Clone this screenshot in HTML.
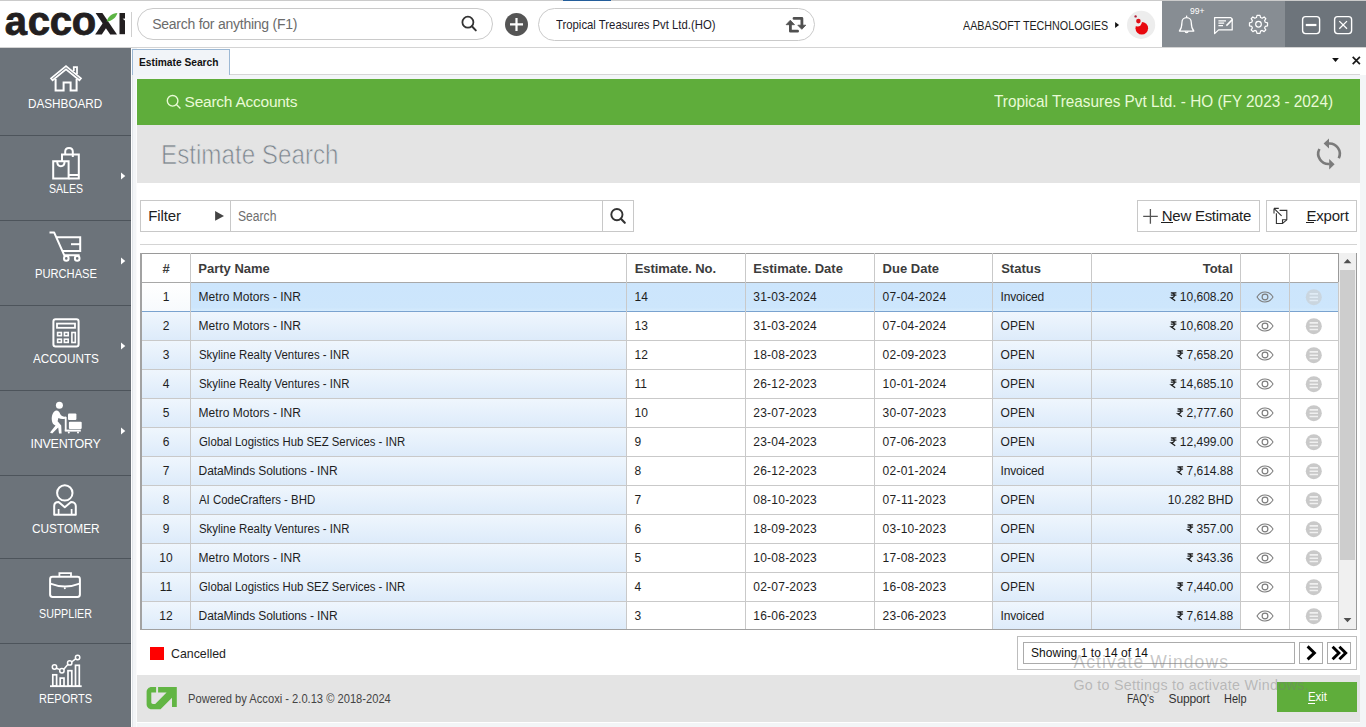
<!DOCTYPE html>
<html><head><meta charset="utf-8">
<style>
*{box-sizing:border-box;margin:0;padding:0}
html,body{width:1366px;height:727px;overflow:hidden;background:#fff;font-family:"Liberation Sans",sans-serif;color:#222}
body{position:relative}
.a{position:absolute}
.t{position:absolute;white-space:nowrap;line-height:1}
svg{position:absolute;overflow:visible}
</style></head><body>
<div class="a" style="left:0px;top:0px;width:1366px;height:1px;background:#cbcbcb;"></div>
<div class="a" style="left:563px;top:0px;width:48px;height:1px;background:#235e9b;"></div>
<div class="a" style="left:0px;top:47px;width:1366px;height:1px;background:#d4d4d4;"></div>
<div class="t" style="left:4.83px;top:0.94px;font-size:40px;color:#231f20;font-weight:700;-webkit-text-stroke:0.8px #231f20;">a</div>
<div class="t" style="left:27.64px;top:0.94px;font-size:40px;color:#231f20;font-weight:700;-webkit-text-stroke:0.8px #231f20;">c</div>
<div class="t" style="left:49.64px;top:0.94px;font-size:40px;color:#231f20;font-weight:700;-webkit-text-stroke:0.8px #231f20;">c</div>
<div class="t" style="left:71.74px;top:0.94px;font-size:40px;color:#231f20;font-weight:700;-webkit-text-stroke:0.8px #231f20;">o</div>
<svg style="left:0;top:0" width="131" height="47" viewBox="0 0 131 47"><path d="M119.5 13 H125 V34.2 H119.5 Z" fill="#231f20"/><path d="M122.6 18.8 L125.2 18.4 L125.2 20.8 Z" fill="#fff"/><path d="M95.6 12.9 H102.4 L117 34.4 H110.2 Z" fill="#231f20"/><path d="M95.2 34.4 H101.8 L107.8 25.6 L104.4 20.8 Z" fill="#231f20"/><path d="M106.6 21.6 C108.2 16.4 111.8 13.4 117.4 13 C116 17.8 112.2 20.9 106.6 21.6 Z" fill="#5cb544"/></svg>
<div class="a" style="left:131px;top:12px;width:1px;height:25px;background:#cfcfcf;"></div>
<div class="a" style="left:137px;top:8px;width:356px;height:32px;border:1px solid #cacaca;border-radius:16px"></div>
<div class="t" style="left:152.20px;top:17.15px;font-size:14px;color:#6b6b6b;letter-spacing:-0.249px;">Search for anything (F1)</div>
<svg style="left:455px;top:10px" width="30" height="30" viewBox="455 10 30 30"><circle cx="467.9" cy="22.2" r="5.5" fill="none" stroke="#333" stroke-width="1.8"/><path d="M471.9 26.3 L475.8 30.4" stroke="#333" stroke-width="2" stroke-linecap="round"/></svg>
<svg style="left:500px;top:8px" width="34" height="34" viewBox="500 8 34 34"><circle cx="516.5" cy="24.4" r="11.5" fill="#555"/><path d="M510 24.4 H523 M516.5 17.9 V30.9" stroke="#fff" stroke-width="2.2"/></svg>
<div class="a" style="left:538px;top:8px;width:277px;height:33px;border:1px solid #cacaca;border-radius:16.5px"></div>
<div class="t" style="left:555.90px;top:18.10px;font-size:13px;color:#1d1b2a;transform:scaleX(0.8715);transform-origin:0 0;">Tropical Treasures Pvt Ltd.(HO)</div>
<svg style="left:780px;top:12px" width="30" height="26" viewBox="780 12 30 26"><path d="M790.4 24 V31.2 H797.6" fill="none" stroke="#505050" stroke-width="2.8" stroke-linejoin="round" stroke-linecap="round"/><path d="M786.1 24.7 L790.3 20.2 L794.5 24.7 Z" fill="#505050" stroke="#505050" stroke-width="0.8" stroke-linejoin="round"/><path d="M794 18.4 H801.9 V25.6" fill="none" stroke="#505050" stroke-width="2.8" stroke-linejoin="round" stroke-linecap="round"/><path d="M797.8 25.2 L801.8 29.3 L805.8 25.2 Z" fill="#505050" stroke="#505050" stroke-width="0.8" stroke-linejoin="round"/></svg>
<div class="t" style="left:962.60px;top:18.80px;font-size:13px;color:#1e1e1e;transform:scaleX(0.8260);transform-origin:0 0;">AABASOFT TECHNOLOGIES</div>
<svg style="left:1112px;top:18px" width="10" height="14" viewBox="1112 18 10 14"><path d="M1115.1 22 L1119.1 25 L1115.1 28.1 Z" fill="#111"/></svg>
<svg style="left:1125px;top:9px" width="32" height="32" viewBox="1125 9 32 32"><circle cx="1141.1" cy="24.9" r="14.1" fill="#ededed"/><circle cx="1141.8" cy="28.3" r="6.3" fill="#e8080e"/><circle cx="1137.6" cy="22.2" r="4.2" fill="#ededed"/><circle cx="1138.4" cy="21.1" r="2.3" fill="#e01018"/><circle cx="1135.6" cy="16.4" r="1.2" fill="#b0203a"/></svg>
<div class="a" style="left:1162px;top:1px;width:123px;height:46px;background:#878d93;"></div>
<div class="a" style="left:1285px;top:1px;width:81px;height:46px;background:#6d747b;"></div>
<svg style="left:1162px;top:1px" width="204" height="46" viewBox="1162 1 204 46" fill="none" stroke="#fff" stroke-width="1.25"><path d="M1179.4 31 H1193.8 C1191.8 28.6 1191.3 26 1191.3 22.7 C1191.3 19.6 1189.2 17.6 1186.6 17.6 C1184 17.6 1181.9 19.6 1181.9 22.7 C1181.9 26 1181.4 28.6 1179.4 31 Z" stroke-linejoin="round"/><path d="M1186.6 17.5 V15.6"/><path d="M1185.2 31.2 A1.4 1.4 0 0 0 1188 31.2"/><path d="M1214.6 33.6 V17.6 H1230.8 L1232.2 19 V29.9 H1218.6 Z" stroke-linejoin="round"/><path d="M1218.4 20.8 H1226 M1218.4 23.2 H1224.2 M1218.4 25.7 H1223" stroke-width="1.3"/><path d="M1226.4 25.6 L1232.6 19.4" stroke-width="1.5"/><g transform="translate(1258.5 24.3) scale(0.94)" stroke-width="1.3"><path d="M-1.6 -9.6 H1.6 L2.2 -7.2 L3.9 -6.5 L6 -7.8 L7.8 -6 L6.5 -3.9 L7.2 -2.2 L9.6 -1.6 V1.6 L7.2 2.2 L6.5 3.9 L7.8 6 L6 7.8 L3.9 6.5 L2.2 7.2 L1.6 9.6 H-1.6 L-2.2 7.2 L-3.9 6.5 L-6 7.8 L-7.8 6 L-6.5 3.9 L-7.2 2.2 L-9.6 1.6 V-1.6 L-7.2 -2.2 L-6.5 -3.9 L-7.8 -6 L-6 -7.8 L-3.9 -6.5 L-2.2 -7.2 Z" stroke-linejoin="round"/><circle r="3" /></g><rect x="1302.6" y="16.6" width="17" height="17" rx="3" stroke-width="1.4"/><path d="M1305.8 25 H1316.4" stroke-width="2.2"/><rect x="1334.6" y="16.6" width="17" height="17" rx="3" stroke-width="1.4"/><path d="M1339.3 21.1 L1347 28.8 M1347 21.1 L1339.3 28.8" stroke-width="1.3"/></svg>
<div class="t" style="left:1190.40px;top:7.38px;font-size:9px;color:#ffffff;transform:scaleX(0.9554);transform-origin:0 0;">99+</div>
<div class="a" style="left:0px;top:48px;width:131px;height:679px;background:#6c737a;"></div>
<div class="a" style="left:0px;top:135px;width:131px;height:1px;background:#4d545b;"></div>
<div class="a" style="left:0px;top:220px;width:131px;height:1px;background:#4d545b;"></div>
<div class="a" style="left:0px;top:305px;width:131px;height:1px;background:#4d545b;"></div>
<div class="a" style="left:0px;top:390px;width:131px;height:1px;background:#4d545b;"></div>
<div class="a" style="left:0px;top:475px;width:131px;height:1px;background:#4d545b;"></div>
<div class="a" style="left:0px;top:558px;width:131px;height:1px;background:#4d545b;"></div>
<div class="a" style="left:0px;top:643px;width:131px;height:1px;background:#4d545b;"></div>
<div class="a" style="left:131px;top:48px;width:6px;height:679px;background:#f3f5f7;"></div>
<div class="a" style="left:131px;top:48px;width:1px;height:679px;background:#ffffff;"></div>
<div class="a" style="left:132px;top:75px;width:1px;height:652px;background:#e1e5e9;"></div>
<div class="a" style="left:136px;top:75px;width:1px;height:652px;background:#fbfbfc;"></div>
<div class="t" style="left:28.45px;top:98.02px;font-size:12.5px;color:#ffffff;transform:scaleX(0.9383);transform-origin:0 0;">DASHBOARD</div>
<div class="t" style="left:48.55px;top:183.12px;font-size:12.5px;color:#ffffff;transform:scaleX(0.8459);transform-origin:0 0;">SALES</div>
<div class="t" style="left:34.60px;top:268.02px;font-size:12.5px;color:#ffffff;transform:scaleX(0.8925);transform-origin:0 0;">PURCHASE</div>
<div class="t" style="left:32.65px;top:352.72px;font-size:12.5px;color:#ffffff;transform:scaleX(0.9393);transform-origin:0 0;">ACCOUNTS</div>
<div class="t" style="left:30.60px;top:438.02px;font-size:12.5px;color:#ffffff;letter-spacing:-0.276px;">INVENTORY</div>
<div class="t" style="left:31.80px;top:522.72px;font-size:12.5px;color:#ffffff;transform:scaleX(0.9479);transform-origin:0 0;">CUSTOMER</div>
<div class="t" style="left:39.10px;top:607.52px;font-size:12.5px;color:#ffffff;transform:scaleX(0.8570);transform-origin:0 0;">SUPPLIER</div>
<div class="t" style="left:39.10px;top:693.12px;font-size:12.5px;color:#ffffff;transform:scaleX(0.8804);transform-origin:0 0;">REPORTS</div>
<svg style="left:118px;top:169.5px" width="10" height="12" viewBox="118 169.5 10 12"><path d="M121 171.9 L125.3 175.5 L121 179.1 Z" fill="#fff"/></svg>
<svg style="left:118px;top:254.5px" width="10" height="12" viewBox="118 254.5 10 12"><path d="M121 256.9 L125.3 260.5 L121 264.1 Z" fill="#fff"/></svg>
<svg style="left:118px;top:339.5px" width="10" height="12" viewBox="118 339.5 10 12"><path d="M121 341.9 L125.3 345.5 L121 349.1 Z" fill="#fff"/></svg>
<svg style="left:118px;top:424.5px" width="10" height="12" viewBox="118 424.5 10 12"><path d="M121 426.9 L125.3 430.5 L121 434.1 Z" fill="#fff"/></svg>
<svg style="left:0;top:48px" width="131" height="679" viewBox="0 48 131 679" fill="none" stroke="#fff" stroke-width="2"><path d="M51 78.3 L66 66 L81 78.3 L79.4 80.2 L66 69.3 L52.6 80.2 Z" stroke-width="1.7" stroke-linejoin="miter"/><path d="M55.6 79 V90.6 H63.6 V82.4 H70.6 V90.6 H76.6 V79" /><path d="M73.8 71 V67.2 H77 V74" stroke-width="1.8"/><path d="M53.2 161.3 H68.6 V178.4 H53.2 Z"/><path d="M57.2 161.3 C57.2 167.8 64.6 167.8 64.6 161.3"/><path d="M62 161.3 V154.5 H78.8 V178.4 H68.6"/><path d="M68.6 175 H78.8"/><path d="M65.2 154.5 V151.8 C65.2 146.8 72.8 146.8 72.8 151.8 V157"/><path d="M49.5 232.6 H54.2 L64.2 255.2 H79.6" stroke-linejoin="round"/><path d="M56.6 237.2 H80.2 V251 H62.4"/><path d="M71 244.2 H80.2"/><circle cx="66.3" cy="258.4" r="2.3"/><circle cx="77.2" cy="258.4" r="2.3"/><rect x="53.4" y="319.2" width="25.2" height="27.2" rx="2.2"/><rect x="57" y="323.6" width="18" height="4.2" stroke-width="1.8"/><rect x="57.6" y="332.5" width="3.8" height="3.2" stroke-width="1.6"/><rect x="64.4" y="332.5" width="3.8" height="3.2" stroke-width="1.6"/><rect x="57.6" y="339.2" width="3.8" height="3.2" stroke-width="1.6"/><rect x="64.4" y="339.2" width="3.8" height="3.2" stroke-width="1.6"/><rect x="71.9" y="332.5" width="3.4" height="10" stroke-width="1.6"/><circle cx="64.8" cy="492.9" r="7.7"/><path d="M54.2 514.8 V506 C54.2 503.6 56 502 58.6 502 L64.8 507.2 L71 502 C73.6 502 75.8 503.6 75.8 506 V514.8 Z" stroke-linejoin="round"/><path d="M58.6 509 V514.8 M71.6 509 V514.8" stroke-width="1.7"/><rect x="50.1" y="576.8" width="29.8" height="20.2" rx="2.4"/><path d="M59.4 576.8 V573.2 H71 V576.8" stroke-width="1.8"/><path d="M50.4 583.6 Q65 589.4 79.6 583.6" stroke-width="1.8"/><circle cx="64.8" cy="588.2" r="1" fill="#fff" stroke="none"/><path d="M50 686.2 H81.7" stroke-width="1.8"/><rect x="52.8" y="674.8" width="3.8" height="11.2" stroke-width="1.7"/><rect x="60.2" y="678.1" width="3.8" height="8" stroke-width="1.7"/><rect x="68" y="670.7" width="3.8" height="15.4" stroke-width="1.7"/><rect x="75.5" y="665.3" width="3.8" height="20.8" stroke-width="1.7"/><path d="M56.4 668.2 L60 669.6 M63.6 669.4 L68 664.2 M71.6 662 L75.6 658.8" stroke-width="1.5"/><circle cx="54.5" cy="667" r="2.2" stroke-width="1.5"/><circle cx="61.9" cy="670.7" r="2.2" stroke-width="1.5"/><circle cx="69.7" cy="662.9" r="2.2" stroke-width="1.5"/><circle cx="77.6" cy="657.5" r="2.2" stroke-width="1.5"/></svg>
<svg style="left:0;top:390px" width="131" height="85" viewBox="0 390 131 85" fill="#fff"><circle cx="59.4" cy="405.3" r="3.5"/><path d="M56 410.5 C53 411.5 51.5 415.5 51.8 420 C52 423 53.5 425 55.5 425.5 L50 432.4 L52.2 433.6 L58.2 427.6 L59 433.4 L61.6 433.4 L61.2 425.5 L57.6 421.2 L58.4 418 C60.4 419.2 63 419.6 65.8 418.4 L65.8 416.6 C63.4 417 61.4 416 60.2 414 C59.4 411.5 58 410.2 56 410.5 Z"/><rect x="64.8" y="416.9" width="1.8" height="14"/><rect x="64.8" y="429.6" width="16" height="2"/><circle cx="68.8" cy="432.6" r="1"/><circle cx="78" cy="432.6" r="1"/><rect x="68" y="413.6" width="8.4" height="6.4" rx="1"/><rect x="68.9" y="421.8" width="12.8" height="7.2" rx="1"/></svg>
<div class="a" style="left:133px;top:75px;width:1227px;height:4px;background:#f3f5f8;"></div>
<div class="a" style="left:132px;top:49px;width:98px;height:26px;background:#f1f4f8;border:1px solid #9cb8d4;border-bottom:none"></div>
<div class="t" style="left:138.60px;top:56.89px;font-size:11px;color:#111;font-weight:700;transform:scaleX(0.9286);transform-origin:0 0;">Estimate Search</div>
<div class="a" style="left:230px;top:74px;width:1130px;height:1px;background:#d6d6d6;"></div>
<svg style="left:1328px;top:52px" width="38" height="18" viewBox="1328 52 38 18"><path d="M1332.1 57.9 H1338.9 L1335.5 61.9 Z" fill="#111"/><path d="M1352.7 56.9 L1359.9 64.1 M1359.9 56.9 L1352.7 64.1" stroke="#1a1a1a" stroke-width="1.7"/></svg>
<div class="a" style="left:137px;top:79px;width:1223px;height:46px;background:#5fad3b;"></div>
<svg style="left:160px;top:90px" width="26" height="24" viewBox="160 90 26 24" fill="none" stroke="#e9fad6" stroke-width="1.4"><circle cx="172.6" cy="100.8" r="5.3"/><path d="M176.4 104.6 L180.4 108.4"/></svg>
<div class="t" style="left:184.60px;top:93.58px;font-size:15.5px;color:#e9fad6;letter-spacing:-0.249px;">Search Accounts</div>
<div class="t" style="left:994.10px;top:93.01px;font-size:17px;color:#e9fad6;transform:scaleX(0.9015);transform-origin:0 0;">Tropical Treasures Pvt Ltd. - HO (FY 2023 - 2024)</div>
<div class="a" style="left:137px;top:125px;width:1223px;height:58px;background:#e4e4e4;"></div>
<div class="t" style="left:161.20px;top:140.50px;font-size:28px;color:#7d868e;transform:scaleX(0.8641);transform-origin:0 0;-webkit-text-stroke:0.7px #e4e4e4;">Estimate Search</div>
<svg style="left:1310px;top:134px" width="40" height="40" viewBox="1310 134 40 40" fill="none" stroke="#7b7b7b" stroke-width="2.6"><path d="M1328.4 143.6 A10.3 10.3 0 0 1 1338.8 158.2"/><path d="M1329.6 164 A10.3 10.3 0 0 1 1319.4 149"/><path d="M1323.6 143.4 L1329 138.4 V148.6 Z" fill="#7b7b7b" stroke="none"/><path d="M1334.6 164.3 L1329.2 159 V169.6 Z" fill="#7b7b7b" stroke="none"/></svg>
<div class="a" style="left:140px;top:200px;width:494px;height:32px;border:1px solid #c8c8c8;background:#fff"></div>
<div class="a" style="left:230px;top:200px;width:1px;height:32px;background:#c8c8c8;"></div>
<div class="a" style="left:602px;top:200px;width:1px;height:32px;background:#c8c8c8;"></div>
<div class="t" style="left:148.30px;top:208.20px;font-size:15px;color:#1e1e1e;letter-spacing:-0.124px;">Filter</div>
<svg style="left:210px;top:206px" width="18" height="20" viewBox="210 206 18 20"><path d="M215.1 211.1 L224 216 L215.1 220.8 Z" fill="#444"/></svg>
<div class="t" style="left:237.60px;top:209.15px;font-size:14px;color:#6e6e6e;transform:scaleX(0.8657);transform-origin:0 0;">Search</div>
<svg style="left:604px;top:202px" width="28" height="28" viewBox="604 202 28 28"><circle cx="616.9" cy="214.6" r="5.6" fill="none" stroke="#333" stroke-width="1.9"/><path d="M620.9 218.7 L624.8 222.8" stroke="#333" stroke-width="2.1" stroke-linecap="round"/></svg>
<div class="a" style="left:1137px;top:200px;width:123px;height:32px;border:1px solid #c8c8c8"></div>
<div class="a" style="left:1266px;top:200px;width:91px;height:32px;border:1px solid #c8c8c8"></div>
<svg style="left:1140px;top:204px" width="22" height="24" viewBox="1140 204 22 24"><path d="M1143.2 216.4 H1157.8 M1150.4 209.1 V223.7" stroke="#555" stroke-width="1.3"/></svg>
<div class="t" style="left:1161.80px;top:208.20px;font-size:15px;color:#1e1e1e;letter-spacing:-0.269px;">New Estimate</div>
<div class="a" style="left:1161px;top:222px;width:12px;height:1px;background:#1e1e1e;"></div>
<svg style="left:1268px;top:204px" width="24" height="24" viewBox="1268 204 24 24" fill="none" stroke="#333" stroke-width="1.1"><path d="M1281.6 215.8 L1274.2 208.6 M1274 208.4 H1278.8 M1274 208.4 V213.6"/><path d="M1276.4 213.3 V223.5 H1282.5 L1286.8 219.8 V210.4 H1279.6"/><path d="M1282.5 223.5 V219.8 H1286.8"/></svg>
<div class="t" style="left:1306.40px;top:208.20px;font-size:15px;color:#1e1e1e;letter-spacing:-0.177px;">Export</div>
<div class="a" style="left:1306px;top:222px;width:8px;height:1px;background:#1e1e1e;"></div>
<div class="a" style="left:140px;top:244px;width:1217px;height:1px;background:#d4d4d4;"></div>
<div class="a" style="left:141px;top:253px;width:1216px;height:377px;overflow:hidden;background:#fff">
<div class="a" style="left:49px;top:30px;width:1148px;height:28px;background:linear-gradient(#cce5fc 0%,#cde6fc 88%,#d6ecfd 100%)"></div>
<div class="a" style="left:1px;top:30px;width:48px;height:28px;background:linear-gradient(#ffffff,#f7fafd)"></div>
<div class="a" style="left:0px;top:59px;width:485px;height:28px;background:linear-gradient(#eff6fd,#ddebfa)"></div>
<div class="a" style="left:851px;top:59px;width:248px;height:28px;background:linear-gradient(#eff6fd,#ddebfa)"></div>
<div class="a" style="left:0px;top:88px;width:485px;height:28px;background:linear-gradient(#eff6fd,#ddebfa)"></div>
<div class="a" style="left:851px;top:88px;width:248px;height:28px;background:linear-gradient(#eff6fd,#ddebfa)"></div>
<div class="a" style="left:0px;top:117px;width:485px;height:28px;background:linear-gradient(#eff6fd,#ddebfa)"></div>
<div class="a" style="left:851px;top:117px;width:248px;height:28px;background:linear-gradient(#eff6fd,#ddebfa)"></div>
<div class="a" style="left:0px;top:146px;width:485px;height:28px;background:linear-gradient(#eff6fd,#ddebfa)"></div>
<div class="a" style="left:851px;top:146px;width:248px;height:28px;background:linear-gradient(#eff6fd,#ddebfa)"></div>
<div class="a" style="left:0px;top:175px;width:485px;height:28px;background:linear-gradient(#eff6fd,#ddebfa)"></div>
<div class="a" style="left:851px;top:175px;width:248px;height:28px;background:linear-gradient(#eff6fd,#ddebfa)"></div>
<div class="a" style="left:0px;top:204px;width:485px;height:28px;background:linear-gradient(#eff6fd,#ddebfa)"></div>
<div class="a" style="left:851px;top:204px;width:248px;height:28px;background:linear-gradient(#eff6fd,#ddebfa)"></div>
<div class="a" style="left:0px;top:233px;width:485px;height:28px;background:linear-gradient(#eff6fd,#ddebfa)"></div>
<div class="a" style="left:851px;top:233px;width:248px;height:28px;background:linear-gradient(#eff6fd,#ddebfa)"></div>
<div class="a" style="left:0px;top:262px;width:485px;height:28px;background:linear-gradient(#eff6fd,#ddebfa)"></div>
<div class="a" style="left:851px;top:262px;width:248px;height:28px;background:linear-gradient(#eff6fd,#ddebfa)"></div>
<div class="a" style="left:0px;top:291px;width:485px;height:28px;background:linear-gradient(#eff6fd,#ddebfa)"></div>
<div class="a" style="left:851px;top:291px;width:248px;height:28px;background:linear-gradient(#eff6fd,#ddebfa)"></div>
<div class="a" style="left:0px;top:320px;width:485px;height:28px;background:linear-gradient(#eff6fd,#ddebfa)"></div>
<div class="a" style="left:851px;top:320px;width:248px;height:28px;background:linear-gradient(#eff6fd,#ddebfa)"></div>
<div class="a" style="left:0px;top:349px;width:485px;height:28px;background:linear-gradient(#eff6fd,#ddebfa)"></div>
<div class="a" style="left:851px;top:349px;width:248px;height:28px;background:linear-gradient(#eff6fd,#ddebfa)"></div>
<div class="a" style="left:0;top:0;width:1198px;height:1px;background:#9a9a9a"></div>
<div class="a" style="left:0;top:29px;width:1198px;height:1px;background:#a8a8a8"></div>
<div class="a" style="left:0;top:58px;width:1198px;height:1px;background:#7aa3cf"></div>
<div class="a" style="left:0;top:87px;width:1198px;height:1px;background:#c9c9c9"></div>
<div class="a" style="left:0;top:116px;width:1198px;height:1px;background:#c9c9c9"></div>
<div class="a" style="left:0;top:145px;width:1198px;height:1px;background:#c9c9c9"></div>
<div class="a" style="left:0;top:174px;width:1198px;height:1px;background:#c9c9c9"></div>
<div class="a" style="left:0;top:203px;width:1198px;height:1px;background:#c9c9c9"></div>
<div class="a" style="left:0;top:232px;width:1198px;height:1px;background:#c9c9c9"></div>
<div class="a" style="left:0;top:261px;width:1198px;height:1px;background:#c9c9c9"></div>
<div class="a" style="left:0;top:290px;width:1198px;height:1px;background:#c9c9c9"></div>
<div class="a" style="left:0;top:319px;width:1198px;height:1px;background:#c9c9c9"></div>
<div class="a" style="left:0;top:348px;width:1198px;height:1px;background:#c9c9c9"></div>
<div class="a" style="left:0;top:377px;width:1198px;height:1px;background:#c9c9c9"></div>
<div class="a" style="left:49px;top:0;width:1px;height:377px;background:#c9c9c9"></div>
<div class="a" style="left:485px;top:0;width:1px;height:377px;background:#c9c9c9"></div>
<div class="a" style="left:604px;top:0;width:1px;height:377px;background:#c9c9c9"></div>
<div class="a" style="left:733px;top:0;width:1px;height:377px;background:#c9c9c9"></div>
<div class="a" style="left:851px;top:0;width:1px;height:377px;background:#c9c9c9"></div>
<div class="a" style="left:950px;top:0;width:1px;height:377px;background:#c9c9c9"></div>
<div class="a" style="left:1099px;top:0;width:1px;height:377px;background:#c9c9c9"></div>
<div class="a" style="left:1148px;top:0;width:1px;height:377px;background:#c9c9c9"></div>
<div class="a" style="left:1197px;top:0;width:1px;height:377px;background:#c9c9c9"></div>
<div class="a" style="left:0;top:0;width:1px;height:377px;background:#9a9a9a"></div>
<div class="a" style="left:1197px;top:0;width:1px;height:29px;background:#9a9a9a"></div>
<div class="a" style="left:0;top:376px;width:1216px;height:1px;background:#a0a0a0"></div>
<div class="a" style="left:1198px;top:0;width:17px;height:376px;background:#f0f0f0"></div>
<div class="a" style="left:1199px;top:17px;width:15px;height:290px;background:#cdcdcd"></div>
<div class="a" style="left:1215px;top:0;width:1px;height:377px;background:#9a9a9a"></div>
<svg style="left:1198px;top:0" width="17" height="376" viewBox="0 0 17 376"><path d="M4.6 10.2 L8.5 6 L12.4 10.2 Z" fill="#505050"/><path d="M4.6 365 L8.5 369.2 L12.4 365 Z" fill="#505050"/></svg>
</div>
<div class="a" style="left:140px;top:253px;width:2px;height:377px;background:#a2a2a2;"></div>
<div class="t" style="left:162.38px;top:262.30px;font-size:13px;color:#3c3c3c;font-weight:700;">#</div>
<div class="t" style="left:198.30px;top:262.30px;font-size:13px;color:#3c3c3c;font-weight:700;">Party Name</div>
<div class="t" style="left:634.70px;top:262.30px;font-size:13px;color:#3c3c3c;font-weight:700;letter-spacing:-0.081px;">Estimate. No.</div>
<div class="t" style="left:753.30px;top:262.30px;font-size:13px;color:#3c3c3c;font-weight:700;">Estimate. Date</div>
<div class="t" style="left:882.60px;top:262.30px;font-size:13px;color:#3c3c3c;font-weight:700;">Due Date</div>
<div class="t" style="left:1001.20px;top:262.30px;font-size:13px;color:#3c3c3c;font-weight:700;">Status</div>
<div class="t" style="left:1202.71px;top:262.30px;font-size:13px;color:#3c3c3c;font-weight:700;">Total</div>
<div class="t" style="left:162.66px;top:290.84px;font-size:12px;color:#1e1e1e;">1</div>
<div class="t" style="left:198.60px;top:290.84px;font-size:12px;color:#1e1e1e;letter-spacing:0.021px;">Metro Motors - INR</div>
<div class="t" style="left:634.50px;top:290.84px;font-size:12px;color:#1e1e1e;">14</div>
<div class="t" style="left:753.30px;top:290.84px;font-size:12px;color:#1e1e1e;letter-spacing:0.231px;">31-03-2024</div>
<div class="t" style="left:882.60px;top:290.84px;font-size:12px;color:#1e1e1e;letter-spacing:0.231px;">07-04-2024</div>
<div class="t" style="left:1000.60px;top:290.84px;font-size:12px;color:#1e1e1e;letter-spacing:-0.163px;">Invoiced</div>
<div class="t" style="left:1179.81px;top:290.84px;font-size:12px;color:#1e1e1e;">10,608.20</div>
<svg style="left:0;top:0" width="1366" height="727" viewBox="0 0 1366 727"><path d="M1170.81 292.80 H1176.41 M1170.81 295.20 H1176.41 M1171.11 292.80 C1175.41 292.80 1175.61 297.80 1171.11 297.80 L1175.21 300.80" fill="none" stroke="#1e1e1e" stroke-width="1.25"/></svg>
<div class="t" style="left:162.66px;top:319.84px;font-size:12px;color:#1e1e1e;">2</div>
<div class="t" style="left:198.60px;top:319.84px;font-size:12px;color:#1e1e1e;letter-spacing:0.021px;">Metro Motors - INR</div>
<div class="t" style="left:634.50px;top:319.84px;font-size:12px;color:#1e1e1e;">13</div>
<div class="t" style="left:753.30px;top:319.84px;font-size:12px;color:#1e1e1e;letter-spacing:0.231px;">31-03-2024</div>
<div class="t" style="left:882.60px;top:319.84px;font-size:12px;color:#1e1e1e;letter-spacing:0.231px;">07-04-2024</div>
<div class="t" style="left:1000.60px;top:319.84px;font-size:12px;color:#1e1e1e;">OPEN</div>
<div class="t" style="left:1179.81px;top:319.84px;font-size:12px;color:#1e1e1e;">10,608.20</div>
<svg style="left:0;top:0" width="1366" height="727" viewBox="0 0 1366 727"><path d="M1170.81 321.80 H1176.41 M1170.81 324.20 H1176.41 M1171.11 321.80 C1175.41 321.80 1175.61 326.80 1171.11 326.80 L1175.21 329.80" fill="none" stroke="#1e1e1e" stroke-width="1.25"/></svg>
<div class="t" style="left:162.66px;top:348.84px;font-size:12px;color:#1e1e1e;">3</div>
<div class="t" style="left:198.60px;top:348.84px;font-size:12px;color:#1e1e1e;transform:scaleX(0.9515);transform-origin:0 0;">Skyline Realty Ventures - INR</div>
<div class="t" style="left:634.50px;top:348.84px;font-size:12px;color:#1e1e1e;">12</div>
<div class="t" style="left:753.30px;top:348.84px;font-size:12px;color:#1e1e1e;letter-spacing:0.231px;">18-08-2023</div>
<div class="t" style="left:882.60px;top:348.84px;font-size:12px;color:#1e1e1e;letter-spacing:0.231px;">02-09-2023</div>
<div class="t" style="left:1000.60px;top:348.84px;font-size:12px;color:#1e1e1e;">OPEN</div>
<div class="t" style="left:1186.48px;top:348.84px;font-size:12px;color:#1e1e1e;">7,658.20</div>
<svg style="left:0;top:0" width="1366" height="727" viewBox="0 0 1366 727"><path d="M1177.48 350.80 H1183.08 M1177.48 353.20 H1183.08 M1177.78 350.80 C1182.08 350.80 1182.28 355.80 1177.78 355.80 L1181.88 358.80" fill="none" stroke="#1e1e1e" stroke-width="1.25"/></svg>
<div class="t" style="left:162.66px;top:377.84px;font-size:12px;color:#1e1e1e;">4</div>
<div class="t" style="left:198.60px;top:377.84px;font-size:12px;color:#1e1e1e;transform:scaleX(0.9515);transform-origin:0 0;">Skyline Realty Ventures - INR</div>
<div class="t" style="left:634.50px;top:377.84px;font-size:12px;color:#1e1e1e;">11</div>
<div class="t" style="left:753.30px;top:377.84px;font-size:12px;color:#1e1e1e;letter-spacing:0.231px;">26-12-2023</div>
<div class="t" style="left:882.60px;top:377.84px;font-size:12px;color:#1e1e1e;letter-spacing:0.231px;">10-01-2024</div>
<div class="t" style="left:1000.60px;top:377.84px;font-size:12px;color:#1e1e1e;">OPEN</div>
<div class="t" style="left:1179.81px;top:377.84px;font-size:12px;color:#1e1e1e;">14,685.10</div>
<svg style="left:0;top:0" width="1366" height="727" viewBox="0 0 1366 727"><path d="M1170.81 379.80 H1176.41 M1170.81 382.20 H1176.41 M1171.11 379.80 C1175.41 379.80 1175.61 384.80 1171.11 384.80 L1175.21 387.80" fill="none" stroke="#1e1e1e" stroke-width="1.25"/></svg>
<div class="t" style="left:162.66px;top:406.84px;font-size:12px;color:#1e1e1e;">5</div>
<div class="t" style="left:198.60px;top:406.84px;font-size:12px;color:#1e1e1e;letter-spacing:0.021px;">Metro Motors - INR</div>
<div class="t" style="left:634.50px;top:406.84px;font-size:12px;color:#1e1e1e;">10</div>
<div class="t" style="left:753.30px;top:406.84px;font-size:12px;color:#1e1e1e;letter-spacing:0.231px;">23-07-2023</div>
<div class="t" style="left:882.60px;top:406.84px;font-size:12px;color:#1e1e1e;letter-spacing:0.231px;">30-07-2023</div>
<div class="t" style="left:1000.60px;top:406.84px;font-size:12px;color:#1e1e1e;">OPEN</div>
<div class="t" style="left:1186.48px;top:406.84px;font-size:12px;color:#1e1e1e;">2,777.60</div>
<svg style="left:0;top:0" width="1366" height="727" viewBox="0 0 1366 727"><path d="M1177.48 408.80 H1183.08 M1177.48 411.20 H1183.08 M1177.78 408.80 C1182.08 408.80 1182.28 413.80 1177.78 413.80 L1181.88 416.80" fill="none" stroke="#1e1e1e" stroke-width="1.25"/></svg>
<div class="t" style="left:162.66px;top:435.84px;font-size:12px;color:#1e1e1e;">6</div>
<div class="t" style="left:198.60px;top:435.84px;font-size:12px;color:#1e1e1e;transform:scaleX(0.9480);transform-origin:0 0;">Global Logistics Hub SEZ Services - INR</div>
<div class="t" style="left:634.50px;top:435.84px;font-size:12px;color:#1e1e1e;">9</div>
<div class="t" style="left:753.30px;top:435.84px;font-size:12px;color:#1e1e1e;letter-spacing:0.231px;">23-04-2023</div>
<div class="t" style="left:882.60px;top:435.84px;font-size:12px;color:#1e1e1e;letter-spacing:0.231px;">07-06-2023</div>
<div class="t" style="left:1000.60px;top:435.84px;font-size:12px;color:#1e1e1e;">OPEN</div>
<div class="t" style="left:1179.81px;top:435.84px;font-size:12px;color:#1e1e1e;">12,499.00</div>
<svg style="left:0;top:0" width="1366" height="727" viewBox="0 0 1366 727"><path d="M1170.81 437.80 H1176.41 M1170.81 440.20 H1176.41 M1171.11 437.80 C1175.41 437.80 1175.61 442.80 1171.11 442.80 L1175.21 445.80" fill="none" stroke="#1e1e1e" stroke-width="1.25"/></svg>
<div class="t" style="left:162.66px;top:464.84px;font-size:12px;color:#1e1e1e;">7</div>
<div class="t" style="left:198.60px;top:464.84px;font-size:12px;color:#1e1e1e;letter-spacing:-0.100px;">DataMinds Solutions - INR</div>
<div class="t" style="left:634.50px;top:464.84px;font-size:12px;color:#1e1e1e;">8</div>
<div class="t" style="left:753.30px;top:464.84px;font-size:12px;color:#1e1e1e;letter-spacing:0.231px;">26-12-2023</div>
<div class="t" style="left:882.60px;top:464.84px;font-size:12px;color:#1e1e1e;letter-spacing:0.231px;">02-01-2024</div>
<div class="t" style="left:1000.60px;top:464.84px;font-size:12px;color:#1e1e1e;letter-spacing:-0.163px;">Invoiced</div>
<div class="t" style="left:1186.48px;top:464.84px;font-size:12px;color:#1e1e1e;">7,614.88</div>
<svg style="left:0;top:0" width="1366" height="727" viewBox="0 0 1366 727"><path d="M1177.48 466.80 H1183.08 M1177.48 469.20 H1183.08 M1177.78 466.80 C1182.08 466.80 1182.28 471.80 1177.78 471.80 L1181.88 474.80" fill="none" stroke="#1e1e1e" stroke-width="1.25"/></svg>
<div class="t" style="left:162.66px;top:493.84px;font-size:12px;color:#1e1e1e;">8</div>
<div class="t" style="left:198.60px;top:493.84px;font-size:12px;color:#1e1e1e;transform:scaleX(0.9521);transform-origin:0 0;">AI CodeCrafters - BHD</div>
<div class="t" style="left:634.50px;top:493.84px;font-size:12px;color:#1e1e1e;">7</div>
<div class="t" style="left:753.30px;top:493.84px;font-size:12px;color:#1e1e1e;letter-spacing:0.231px;">08-10-2023</div>
<div class="t" style="left:882.60px;top:493.84px;font-size:12px;color:#1e1e1e;letter-spacing:0.320px;">07-11-2023</div>
<div class="t" style="left:1000.60px;top:493.84px;font-size:12px;color:#1e1e1e;">OPEN</div>
<div class="t" style="left:1167.83px;top:493.84px;font-size:12px;color:#1e1e1e;">10.282 BHD</div>
<div class="t" style="left:162.66px;top:522.84px;font-size:12px;color:#1e1e1e;">9</div>
<div class="t" style="left:198.60px;top:522.84px;font-size:12px;color:#1e1e1e;transform:scaleX(0.9515);transform-origin:0 0;">Skyline Realty Ventures - INR</div>
<div class="t" style="left:634.50px;top:522.84px;font-size:12px;color:#1e1e1e;">6</div>
<div class="t" style="left:753.30px;top:522.84px;font-size:12px;color:#1e1e1e;letter-spacing:0.231px;">18-09-2023</div>
<div class="t" style="left:882.60px;top:522.84px;font-size:12px;color:#1e1e1e;letter-spacing:0.231px;">03-10-2023</div>
<div class="t" style="left:1000.60px;top:522.84px;font-size:12px;color:#1e1e1e;">OPEN</div>
<div class="t" style="left:1196.50px;top:522.84px;font-size:12px;color:#1e1e1e;">357.00</div>
<svg style="left:0;top:0" width="1366" height="727" viewBox="0 0 1366 727"><path d="M1187.50 524.80 H1193.10 M1187.50 527.20 H1193.10 M1187.80 524.80 C1192.10 524.80 1192.30 529.80 1187.80 529.80 L1191.90 532.80" fill="none" stroke="#1e1e1e" stroke-width="1.25"/></svg>
<div class="t" style="left:159.32px;top:551.84px;font-size:12px;color:#1e1e1e;">10</div>
<div class="t" style="left:198.60px;top:551.84px;font-size:12px;color:#1e1e1e;letter-spacing:0.021px;">Metro Motors - INR</div>
<div class="t" style="left:634.50px;top:551.84px;font-size:12px;color:#1e1e1e;">5</div>
<div class="t" style="left:753.30px;top:551.84px;font-size:12px;color:#1e1e1e;letter-spacing:0.231px;">10-08-2023</div>
<div class="t" style="left:882.60px;top:551.84px;font-size:12px;color:#1e1e1e;letter-spacing:0.231px;">17-08-2023</div>
<div class="t" style="left:1000.60px;top:551.84px;font-size:12px;color:#1e1e1e;">OPEN</div>
<div class="t" style="left:1196.50px;top:551.84px;font-size:12px;color:#1e1e1e;">343.36</div>
<svg style="left:0;top:0" width="1366" height="727" viewBox="0 0 1366 727"><path d="M1187.50 553.80 H1193.10 M1187.50 556.20 H1193.10 M1187.80 553.80 C1192.10 553.80 1192.30 558.80 1187.80 558.80 L1191.90 561.80" fill="none" stroke="#1e1e1e" stroke-width="1.25"/></svg>
<div class="t" style="left:159.77px;top:580.84px;font-size:12px;color:#1e1e1e;">11</div>
<div class="t" style="left:198.60px;top:580.84px;font-size:12px;color:#1e1e1e;transform:scaleX(0.9480);transform-origin:0 0;">Global Logistics Hub SEZ Services - INR</div>
<div class="t" style="left:634.50px;top:580.84px;font-size:12px;color:#1e1e1e;">4</div>
<div class="t" style="left:753.30px;top:580.84px;font-size:12px;color:#1e1e1e;letter-spacing:0.231px;">02-07-2023</div>
<div class="t" style="left:882.60px;top:580.84px;font-size:12px;color:#1e1e1e;letter-spacing:0.231px;">16-08-2023</div>
<div class="t" style="left:1000.60px;top:580.84px;font-size:12px;color:#1e1e1e;">OPEN</div>
<div class="t" style="left:1186.48px;top:580.84px;font-size:12px;color:#1e1e1e;">7,440.00</div>
<svg style="left:0;top:0" width="1366" height="727" viewBox="0 0 1366 727"><path d="M1177.48 582.80 H1183.08 M1177.48 585.20 H1183.08 M1177.78 582.80 C1182.08 582.80 1182.28 587.80 1177.78 587.80 L1181.88 590.80" fill="none" stroke="#1e1e1e" stroke-width="1.25"/></svg>
<div class="t" style="left:159.32px;top:609.84px;font-size:12px;color:#1e1e1e;">12</div>
<div class="t" style="left:198.60px;top:609.84px;font-size:12px;color:#1e1e1e;letter-spacing:-0.100px;">DataMinds Solutions - INR</div>
<div class="t" style="left:634.50px;top:609.84px;font-size:12px;color:#1e1e1e;">3</div>
<div class="t" style="left:753.30px;top:609.84px;font-size:12px;color:#1e1e1e;letter-spacing:0.231px;">16-06-2023</div>
<div class="t" style="left:882.60px;top:609.84px;font-size:12px;color:#1e1e1e;letter-spacing:0.231px;">23-06-2023</div>
<div class="t" style="left:1000.60px;top:609.84px;font-size:12px;color:#1e1e1e;letter-spacing:-0.163px;">Invoiced</div>
<div class="t" style="left:1186.48px;top:609.84px;font-size:12px;color:#1e1e1e;">7,614.88</div>
<svg style="left:0;top:0" width="1366" height="727" viewBox="0 0 1366 727"><path d="M1177.48 611.80 H1183.08 M1177.48 614.20 H1183.08 M1177.78 611.80 C1182.08 611.80 1182.28 616.80 1177.78 616.80 L1181.88 619.80" fill="none" stroke="#1e1e1e" stroke-width="1.25"/></svg>
<svg style="left:1160px;top:283px" width="180" height="346" viewBox="1160 283 180 346"><path d="M1257 297 C1261 290.4 1269 290.4 1273 297 C1269 303.6 1261 303.6 1257 297 Z" fill="none" stroke="#7c7c7c" stroke-width="1.05"/><circle cx="1265" cy="297" r="2.9" fill="none" stroke="#7c7c7c" stroke-width="1.15"/><g opacity="0.55"><circle cx="1313.8" cy="297.2" r="8" fill="#c9c9c9"/><path d="M1309.6 293.9 H1318 M1309.6 297.2 H1318 M1309.6 300.5 H1318" stroke="#f0f0f0" stroke-width="1.6"/></g><path d="M1257 326 C1261 319.4 1269 319.4 1273 326 C1269 332.6 1261 332.6 1257 326 Z" fill="none" stroke="#7c7c7c" stroke-width="1.05"/><circle cx="1265" cy="326" r="2.9" fill="none" stroke="#7c7c7c" stroke-width="1.15"/><g opacity="1"><circle cx="1313.8" cy="326.2" r="8" fill="#c9c9c9"/><path d="M1309.6 322.9 H1318 M1309.6 326.2 H1318 M1309.6 329.5 H1318" stroke="#f0f0f0" stroke-width="1.6"/></g><path d="M1257 355 C1261 348.4 1269 348.4 1273 355 C1269 361.6 1261 361.6 1257 355 Z" fill="none" stroke="#7c7c7c" stroke-width="1.05"/><circle cx="1265" cy="355" r="2.9" fill="none" stroke="#7c7c7c" stroke-width="1.15"/><g opacity="1"><circle cx="1313.8" cy="355.2" r="8" fill="#c9c9c9"/><path d="M1309.6 351.9 H1318 M1309.6 355.2 H1318 M1309.6 358.5 H1318" stroke="#f0f0f0" stroke-width="1.6"/></g><path d="M1257 384 C1261 377.4 1269 377.4 1273 384 C1269 390.6 1261 390.6 1257 384 Z" fill="none" stroke="#7c7c7c" stroke-width="1.05"/><circle cx="1265" cy="384" r="2.9" fill="none" stroke="#7c7c7c" stroke-width="1.15"/><g opacity="1"><circle cx="1313.8" cy="384.2" r="8" fill="#c9c9c9"/><path d="M1309.6 380.9 H1318 M1309.6 384.2 H1318 M1309.6 387.5 H1318" stroke="#f0f0f0" stroke-width="1.6"/></g><path d="M1257 413 C1261 406.4 1269 406.4 1273 413 C1269 419.6 1261 419.6 1257 413 Z" fill="none" stroke="#7c7c7c" stroke-width="1.05"/><circle cx="1265" cy="413" r="2.9" fill="none" stroke="#7c7c7c" stroke-width="1.15"/><g opacity="1"><circle cx="1313.8" cy="413.2" r="8" fill="#c9c9c9"/><path d="M1309.6 409.9 H1318 M1309.6 413.2 H1318 M1309.6 416.5 H1318" stroke="#f0f0f0" stroke-width="1.6"/></g><path d="M1257 442 C1261 435.4 1269 435.4 1273 442 C1269 448.6 1261 448.6 1257 442 Z" fill="none" stroke="#7c7c7c" stroke-width="1.05"/><circle cx="1265" cy="442" r="2.9" fill="none" stroke="#7c7c7c" stroke-width="1.15"/><g opacity="1"><circle cx="1313.8" cy="442.2" r="8" fill="#c9c9c9"/><path d="M1309.6 438.9 H1318 M1309.6 442.2 H1318 M1309.6 445.5 H1318" stroke="#f0f0f0" stroke-width="1.6"/></g><path d="M1257 471 C1261 464.4 1269 464.4 1273 471 C1269 477.6 1261 477.6 1257 471 Z" fill="none" stroke="#7c7c7c" stroke-width="1.05"/><circle cx="1265" cy="471" r="2.9" fill="none" stroke="#7c7c7c" stroke-width="1.15"/><g opacity="1"><circle cx="1313.8" cy="471.2" r="8" fill="#c9c9c9"/><path d="M1309.6 467.9 H1318 M1309.6 471.2 H1318 M1309.6 474.5 H1318" stroke="#f0f0f0" stroke-width="1.6"/></g><path d="M1257 500 C1261 493.4 1269 493.4 1273 500 C1269 506.6 1261 506.6 1257 500 Z" fill="none" stroke="#7c7c7c" stroke-width="1.05"/><circle cx="1265" cy="500" r="2.9" fill="none" stroke="#7c7c7c" stroke-width="1.15"/><g opacity="1"><circle cx="1313.8" cy="500.2" r="8" fill="#c9c9c9"/><path d="M1309.6 496.9 H1318 M1309.6 500.2 H1318 M1309.6 503.5 H1318" stroke="#f0f0f0" stroke-width="1.6"/></g><path d="M1257 529 C1261 522.4 1269 522.4 1273 529 C1269 535.6 1261 535.6 1257 529 Z" fill="none" stroke="#7c7c7c" stroke-width="1.05"/><circle cx="1265" cy="529" r="2.9" fill="none" stroke="#7c7c7c" stroke-width="1.15"/><g opacity="1"><circle cx="1313.8" cy="529.2" r="8" fill="#c9c9c9"/><path d="M1309.6 525.9 H1318 M1309.6 529.2 H1318 M1309.6 532.5 H1318" stroke="#f0f0f0" stroke-width="1.6"/></g><path d="M1257 558 C1261 551.4 1269 551.4 1273 558 C1269 564.6 1261 564.6 1257 558 Z" fill="none" stroke="#7c7c7c" stroke-width="1.05"/><circle cx="1265" cy="558" r="2.9" fill="none" stroke="#7c7c7c" stroke-width="1.15"/><g opacity="1"><circle cx="1313.8" cy="558.2" r="8" fill="#c9c9c9"/><path d="M1309.6 554.9 H1318 M1309.6 558.2 H1318 M1309.6 561.5 H1318" stroke="#f0f0f0" stroke-width="1.6"/></g><path d="M1257 587 C1261 580.4 1269 580.4 1273 587 C1269 593.6 1261 593.6 1257 587 Z" fill="none" stroke="#7c7c7c" stroke-width="1.05"/><circle cx="1265" cy="587" r="2.9" fill="none" stroke="#7c7c7c" stroke-width="1.15"/><g opacity="1"><circle cx="1313.8" cy="587.2" r="8" fill="#c9c9c9"/><path d="M1309.6 583.9 H1318 M1309.6 587.2 H1318 M1309.6 590.5 H1318" stroke="#f0f0f0" stroke-width="1.6"/></g><path d="M1257 616 C1261 609.4 1269 609.4 1273 616 C1269 622.6 1261 622.6 1257 616 Z" fill="none" stroke="#7c7c7c" stroke-width="1.05"/><circle cx="1265" cy="616" r="2.9" fill="none" stroke="#7c7c7c" stroke-width="1.15"/><g opacity="1"><circle cx="1313.8" cy="616.2" r="8" fill="#c9c9c9"/><path d="M1309.6 612.9 H1318 M1309.6 616.2 H1318 M1309.6 619.5 H1318" stroke="#f0f0f0" stroke-width="1.6"/></g></svg>
<div class="a" style="left:150px;top:647px;width:14px;height:13px;background:#ff0000;"></div>
<div class="t" style="left:170.60px;top:647.20px;font-size:13px;color:#1e1e1e;transform:scaleX(0.9494);transform-origin:0 0;">Cancelled</div>
<div class="a" style="left:1017px;top:636px;width:340px;height:34px;border:1px solid #bdbdbd"></div>
<div class="a" style="left:1023px;top:642px;width:272px;height:22px;border:1px solid #ababab"></div>
<div class="t" style="left:1031.00px;top:646.64px;font-size:12px;color:#111;letter-spacing:0.043px;">Showing 1 to 14 of 14</div>
<div class="a" style="left:1299px;top:642px;width:24px;height:22px;border:1px solid #ababab"></div>
<div class="a" style="left:1327px;top:642px;width:24px;height:22px;border:1px solid #ababab"></div>
<svg style="left:1299px;top:642px" width="52" height="22" viewBox="1299 642 52 22" fill="none" stroke="#000" stroke-width="2.9" stroke-linejoin="miter"><path d="M1307.6 646.4 L1314.4 652.9 L1307.6 659.4"/><path d="M1332.6 646.8 L1338.9 653 L1332.6 659.2 M1339.4 646.8 L1345.7 653 L1339.4 659.2"/></svg>
<div class="a" style="left:137px;top:675px;width:1223px;height:47px;background:#e4e4e4;"></div>
<svg style="left:140px;top:682px" width="44" height="32" viewBox="140 682 44 32"><path d="M156.1 687 H151.6 C148.8 687 146.6 689.2 146.6 692 V704.3 C146.6 707.1 148.8 709.3 151.6 709.3 H160.5 L172 697.8 V706.9 H176.8 V687 H158.1 V692.4 H166.6 L155.2 704 H153 C152 704 151.3 703.3 151.3 702.3 V692.4 H156.1 Z" fill="#62b544"/></svg>
<div class="t" style="left:188.20px;top:693.04px;font-size:12px;color:#444;transform:scaleX(0.9289);transform-origin:0 0;">Powered by Accoxi - 2.0.13 © 2018-2024</div>
<div class="t" style="left:1127.20px;top:693.04px;font-size:12px;color:#333;transform:scaleX(0.8360);transform-origin:0 0;">FAQ&#x27;s</div>
<div class="t" style="left:1168.60px;top:693.04px;font-size:12px;color:#333;letter-spacing:-0.147px;">Support</div>
<div class="t" style="left:1223.50px;top:693.04px;font-size:12px;color:#333;transform:scaleX(0.9114);transform-origin:0 0;">Help</div>
<div class="a" style="left:1277px;top:682px;width:80px;height:30px;background:#5fad3b;"></div>
<div class="t" style="left:1308.00px;top:690.00px;font-size:13px;color:#fff;transform:scaleX(0.8767);transform-origin:0 0;">Exit</div>
<div class="a" style="left:1308px;top:703px;width:7px;height:1px;background:#fff;"></div>
<div class="t" style="left:1073.40px;top:653.69px;font-size:17.5px;color:rgba(120,120,120,0.42);letter-spacing:1.093px;">Activate Windows</div>
<div class="t" style="left:1073.40px;top:677.70px;font-size:14.3px;color:rgba(120,120,120,0.42);letter-spacing:0.275px;">Go to Settings to activate Windows.</div>
<div class="a" style="left:1360px;top:75px;width:6px;height:652px;background:#f3f5f7;"></div>
<div class="a" style="left:137px;top:723px;width:1223px;height:4px;background:#f3f5f7;"></div>
</body></html>
